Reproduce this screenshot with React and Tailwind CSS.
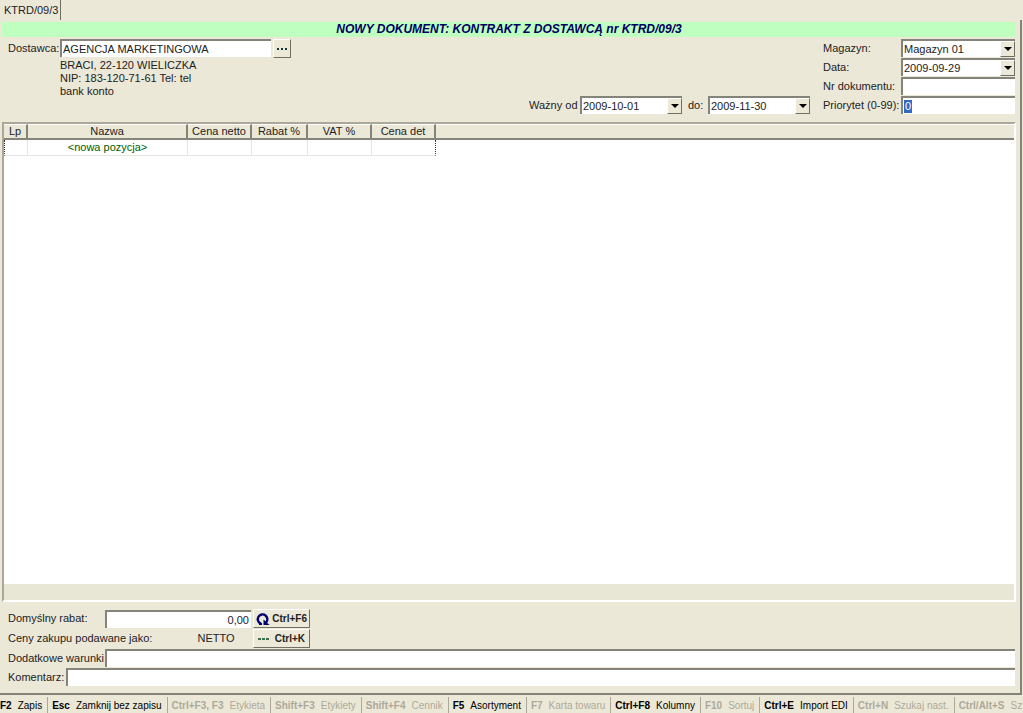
import { useState } from 'react';
import clsx from 'clsx';

const columns = [
  { label: 'Lp', width: 'w-[24px]' },
  { label: 'Nazwa', width: 'w-[160px]' },
  { label: 'Cena netto', width: 'w-[64px]' },
  { label: 'Rabat %', width: 'w-[56px]' },
  { label: 'VAT %', width: 'w-[64px]' },
  { label: 'Cena det', width: 'w-[64px]' },
];

const shortcuts = [
  { keys: 'F2', label: 'Zapis', enabled: true },
  { keys: 'Esc', label: 'Zamknij bez zapisu', enabled: true },
  { keys: 'Ctrl+F3, F3', label: 'Etykieta', enabled: false },
  { keys: 'Shift+F3', label: 'Etykiety', enabled: false },
  { keys: 'Shift+F4', label: 'Cennik', enabled: false },
  { keys: 'F5', label: 'Asortyment', enabled: true },
  { keys: 'F7', label: 'Karta towaru', enabled: false },
  { keys: 'Ctrl+F8', label: 'Kolumny', enabled: true },
  { keys: 'F10', label: 'Sortuj', enabled: false },
  { keys: 'Ctrl+E', label: 'Import EDI', enabled: true },
  { keys: 'Ctrl+N', label: 'Szukaj nast.', enabled: false },
  { keys: 'Ctrl/Alt+S', label: 'Sz', enabled: false },
];

const sunken = 'border-t-2 border-l-2 border-[#85847b] bg-white outline-none';
const raised = 'border border-t-white border-l-white border-r-[#716f64] border-b-[#716f64] bg-[#ece9d8]';

function Combo({ id, value, className }) {
  return (
    <div className={clsx('relative h-[18px]', className)}>
      <select id={id} defaultValue={value} className={clsx('block h-full w-full appearance-none pr-4 pl-px', sunken)}>
        <option>{value}</option>
      </select>
      <span className={clsx('pointer-events-none absolute top-0.5 right-0 bottom-0 flex w-[15px] items-center justify-center', raised)}>
        <svg width="8" height="4" viewBox="0 0 8 4">
          <path d="M0 0h8L4 4z" fill="#000" />
        </svg>
      </span>
    </div>
  );
}

export default function App() {
  const [supplier, setSupplier] = useState('AGENCJA MARKETINGOWA');

  return (
    <div className="flex min-h-screen flex-col overflow-hidden bg-[#ece8d8] font-['Liberation_Sans',Arial,sans-serif] text-[11px] leading-[13px] text-[#222]">
      {/* document tabs */}
      <div className="flex h-5">
        <button className="border-r border-[#716f64] pr-0.5 pl-1">KTRD/09/3</button>
      </div>

      <main className="mr-px flex flex-1 flex-col border-r-2 border-b-2 border-[#85847b] pr-1">
        <h1 className="mt-0.5 ml-0.5 h-[15px] bg-[#bfffbf] text-center text-[12px] leading-[15px] font-bold text-[#000060] italic">
          NOWY DOKUMENT: KONTRAKT Z DOSTAWCĄ nr KTRD/09/3
        </h1>

        {/* header */}
        <section className="mt-0.5 flex items-end justify-between pr-px pl-2">
          <div className="flex self-start">
            <label htmlFor="supplier" className="w-[52px] pt-[3px]">Dostawca:</label>
            <div>
              <div className="mb-px flex gap-0.5">
                <input
                  id="supplier"
                  value={supplier}
                  onChange={(e) => setSupplier(e.target.value)}
                  className={clsx('h-[18px] w-[211px] pl-px', sunken)}
                />
                <button aria-label="Wybierz" className={clsx('flex h-[19px] w-[18px] items-center justify-center', raised)}>
                  <svg width="10" height="2" viewBox="0 0 10 2" fill="#103838">
                    <path d="M0 0h2v2H0zM4 0h2v2H4zM8 0h2v2H8z" />
                  </svg>
                </button>
              </div>
              <p>BRACI, 22-120 WIELICZKA</p>
              <p>NIP: 183-120-71-61 Tel: tel</p>
              <p>bank konto</p>
            </div>
          </div>

          <div className="flex items-end">
            <div className="mr-[13px] flex items-center">
              <label htmlFor="from" className="w-[51px]">Ważny od</label>
              <Combo id="from" value="2009-10-01" className="w-[102px]" />
              <label htmlFor="to" className="w-[26px] pl-1.5">do:</label>
              <Combo id="to" value="2009-11-30" className="w-[102px]" />
            </div>
            <div className="grid grid-cols-[78px_114px] items-center gap-y-px">
              <label htmlFor="store">Magazyn:</label>
              <Combo id="store" value="Magazyn 01" />
              <label htmlFor="date">Data:</label>
              <Combo id="date" value="2009-09-29" />
              <label htmlFor="number">Nr dokumentu:</label>
              <input id="number" className={clsx('h-[18px]', sunken)} />
              <label htmlFor="priority">Priorytet (0-99):</label>
              <div className={clsx('flex h-[18px] items-center pl-px', sunken)}>
                <input id="priority" defaultValue="0" className="h-[13px] w-2 bg-[#316ac5] text-center text-white outline-none" />
              </div>
            </div>
          </div>
        </section>

        {/* items */}
        <section className="mt-2 ml-0.5 flex flex-1 flex-col border-2 border-t-[#aca899] border-r-white border-b-white border-l-[#aca899] bg-white">
          <table className="w-full table-fixed border-separate border-spacing-0">
            <thead>
              <tr className="h-4 bg-[#ece8d8]">
                {columns.map((col) => (
                  <th key={col.label} className={clsx('border-t border-r-2 border-b-2 border-t-white border-r-[#85847b] border-b-[#85847b] p-0 font-normal', col.width)}>
                    {col.label}
                  </th>
                ))}
                <th className="border-t border-b-2 border-t-white border-b-[#85847b] p-0" />
              </tr>
            </thead>
            <tbody>
              <tr className="h-4">
                {columns.map((col, i) => (
                  <td
                    key={col.label}
                    className={clsx(
                      'border-b border-b-[#e6e6e0] p-0 text-center text-[#006000]',
                      i === 0 && 'border-l border-l-[#333] [border-left-style:dotted]',
                      i === columns.length - 1 ? 'border-r border-r-[#333] [border-right-style:dotted]' : 'border-r border-r-[#e6e6e0]',
                    )}
                  >
                    {col.label === 'Nazwa' && '<nowa pozycja>'}
                  </td>
                ))}
                <td />
              </tr>
            </tbody>
          </table>
          <div className="mt-auto h-4 bg-[#e8e6d4]" />
        </section>

        {/* footer form */}
        <section className="mt-[7px] mb-[7px] flex flex-col gap-px pr-px pl-2">
          <div className="flex items-center">
            <label htmlFor="discount" className="w-[97px]">Domyślny rabat:</label>
            <input id="discount" defaultValue="0,00" className={clsx('h-[18px] w-[146px] pr-0.5 text-right', sunken)} />
            <button className={clsx('ml-0.5 flex h-[19px] w-[57px] items-center justify-between px-0.5 text-[10px] font-bold', raised)}>
              <svg width="14" height="14" viewBox="0 0 14 14">
                <path d="M4.6 11.6A4.8 4.8 0 1 1 10 10.6" fill="none" stroke="#000070" strokeWidth="2.4" />
                <path d="M13.5 13H7.5V7.5z" fill="#000070" />
                <path d="M3 10l3 1v2H3z" fill="#000070" />
              </svg>
              Ctrl+F6
            </button>
          </div>
          <div className="flex items-center">
            <span className="w-[173px]">Ceny zakupu podawane jako:</span>
            <span className="w-[70px] text-center">NETTO</span>
            <button className={clsx('ml-0.5 flex h-[19px] w-[57px] items-center justify-between px-1 text-[10px] font-bold', raised)}>
              <svg width="11" height="2" viewBox="0 0 11 2" fill="#3c7048">
                <path d="M0 0h3v2H0zM4 0h3v2H4zM8 0h3v2H8z" />
              </svg>
              Ctrl+K
            </button>
          </div>
          <div className="flex items-center">
            <label htmlFor="terms" className="w-[97px] whitespace-nowrap">Dodatkowe warunki</label>
            <input id="terms" className={clsx('h-[18px] min-w-0 flex-1', sunken)} />
          </div>
          <div className="flex items-center">
            <label htmlFor="comment" className="w-[58px]">Komentarz:</label>
            <input id="comment" className={clsx('h-[18px] min-w-0 flex-1', sunken)} />
          </div>
        </section>
      </main>

      {/* shortcut bar */}
      <footer className="flex h-[18px] w-0 min-w-full overflow-hidden pt-0.5 text-[10px]">
        {shortcuts.map((item, i) => (
          <button
            key={item.keys}
            disabled={!item.enabled}
            className={clsx(
              'flex shrink-0 items-center gap-1.5 whitespace-nowrap',
              i > 0 && 'border-l border-[#aca899] pl-1',
              i < shortcuts.length - 1 && 'pr-[5px]',
              item.enabled ? 'text-black' : 'text-[#aca899]',
            )}
          >
            <b>{item.keys}</b>
            <span>{item.label}</span>
          </button>
        ))}
      </footer>
    </div>
  );
}
